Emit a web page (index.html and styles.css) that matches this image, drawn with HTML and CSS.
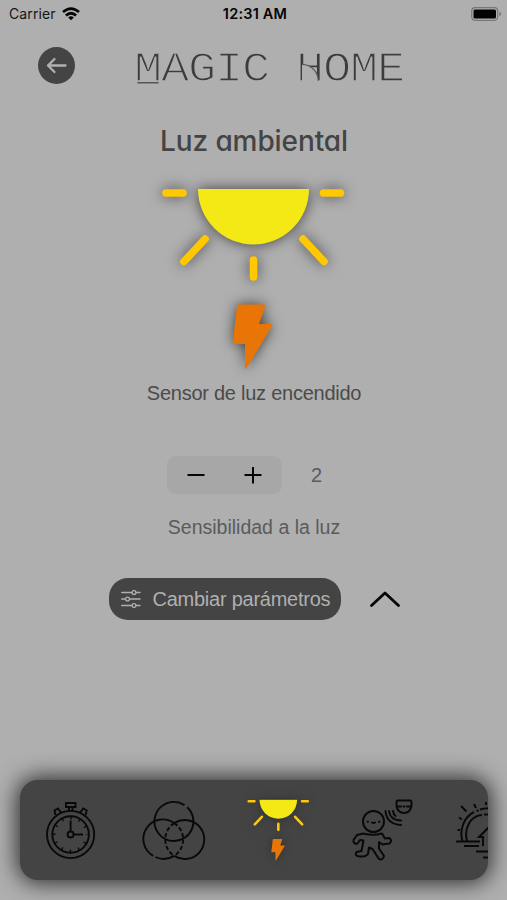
FILE: index.html
```html
<!DOCTYPE html>
<html lang="es">
<head>
<meta charset="utf-8">
<title>Magic Home</title>
<link rel="stylesheet" href="styles.css">
</head>
<body>
<svg class="defs" width="0" height="0" aria-hidden="true">
  <symbol id="sun" viewBox="0 0 186 182">
    <path d="M37 2H148A55.5 55.5 0 0 1 37 2Z" fill="#f4e815"/>
    <g stroke="#ffc800" stroke-width="7.6" stroke-linecap="round">
      <path d="M5 6H22M162.500 6H179.500M44 52 23 74.500M142 52 163 74.500M92.500 73V90"/>
    </g>
    <path d="M78 117.500H102Q105 117.500 104 120L98 137H110Q112 137 111 139L85 182H84V157H73Q71 157 72 154L76 119Q76 117.500 78 117.500Z" fill="#e97506"/>
  </symbol>
</svg>
<div class="screen">
  <header class="status">
    <div class="carrier"><span>Carrier</span>
      <svg width="18" height="14" viewBox="0 0 18 14" fill="none" stroke="#050505" stroke-width="2.700"><path d="M1 5.100Q9-2 17 5.100M3.900 8.600Q9 3.900 14.100 8.600"/><path d="M6.200 10.500Q9 8.200 11.800 10.500L9 13.300Z" fill="#050505" stroke="none"/></svg>
    </div>
    <time>12:31 AM</time>
    <svg class="battery" width="31" height="14" viewBox="0 0 31 14"><rect x=".7" y=".7" width="26" height="12.600" rx="3.500" fill="none" stroke="#777" stroke-width="1.200"/><rect x="2.500" y="2.500" width="22.500" height="9" rx="1.500" fill="#000"/><path d="M28.300 4.500Q32 7 28.300 9.500Z" fill="#777"/></svg>
  </header>
  <div class="brand-row">
    <button class="back" aria-label="Volver"><svg width="37" height="37" viewBox="0 0 37 37" fill="none" stroke="#b0b0b0" stroke-width="2.300" stroke-linecap="round" stroke-linejoin="round"><path d="M27.500 18.500H10M16.500 12 10 18.500 16.500 25"/></svg></button>
    <h1 class="brand"><span class="boxed">M</span>AGIC <span class="arched">H</span>OME</h1>
  </div>
  <main>
    <h2 class="title">Luz ambiental</h2>
    <svg class="hero" width="186" height="182"><use href="#sun"/></svg>
    <p class="state">Sensor de luz encendido</p>
    <div class="level">
      <div class="stepper">
        <button aria-label="Menos"><svg width="18" height="18" stroke="#050505" stroke-width="2"><path d="M.5 9H17.500"/></svg></button>
        <button aria-label="Más"><svg width="18" height="18" stroke="#050505" stroke-width="2"><path d="M.5 9H17.500M9 1V17.500"/></svg></button>
      </div>
      <output>2</output>
    </div>
    <p class="caption">Sensibilidad a la luz</p>
    <div class="actions">
      <button class="change">
        <svg width="20" height="18" viewBox="0 0 20 18" fill="#444" stroke="#b0b0b0" stroke-width="1.300" stroke-linecap="round"><path d="M.7 2.500H19M.7 9H19M.7 15.500H19"/><circle cx="13" cy="2.500" r="1.900"/><circle cx="6.500" cy="9" r="1.900"/><circle cx="13" cy="15.500" r="1.900"/></svg>
        <span>Cambiar parámetros</span>
      </button>
      <svg class="chevron" width="32" height="18" viewBox="0 0 32 18" fill="none" stroke="#050505" stroke-width="2.800" stroke-linecap="round" stroke-linejoin="round"><path d="M2.500 15.500 16 3 29.500 15.500"/></svg>
    </div>
  </main>
  <nav class="dock">
    <div class="track">
      <svg class="timer" width="50" height="59" viewBox="0 0 50 59" fill="none" stroke="#090909" stroke-width="1.900">
        <circle cx="24.600" cy="33.500" r="23.600"/><circle cx="24.600" cy="33.500" r="18.300"/><circle cx="24.600" cy="33.500" r="3"/>
        <path d="M24.600 30.500V19.500M27.600 33.500H37M20 2H29.500V6H20ZM23 6.500V9.500M26.500 6.500V9.500M9.500 14 8.500 9.500 12 7.500 15 11.500M39.700 14 40.700 9.500 37.200 7.500 34.200 11.500"/>
        <circle cx="24.600" cy="33.500" r="16.500" stroke-width="3" stroke-dasharray="1.400 7.239" stroke-dashoffset=".7"/>
      </svg>
      <svg class="venn" width="62" height="59" viewBox="0 0 62 59" fill="none" stroke="#090909" stroke-width="1.900">
        <path d="M41.500 4.100A19.500 19.500 0 1 0 31 40A19.500 19.500 0 0 0 44.200 6.200"/>
        <path d="M31.200 22.100A19.500 19.500 0 1 0 10.200 54.900M12.500 56A19.500 19.500 0 0 0 31.200 54.900"/>
        <path d="M31.200 22.100A19.500 19.500 0 1 1 31.200 54.900"/>
        <path d="M31.200 22.100A19.500 19.500 0 0 1 31.200 54.900M31.200 22.100A19.500 19.500 0 0 0 31.200 54.900" stroke-dasharray="4.200 2.300"/>
      </svg>
      <svg class="mini" width="63" height="62" viewBox="0 0 186 182"><use href="#sun"/></svg>
      <svg width="61" height="63" viewBox="0 0 61 63" fill="none" stroke="#090909" stroke-width="2" stroke-linejoin="round" stroke-linecap="round">
        <circle cx="21.500" cy="22.500" r="10.500"/><path d="M15.500 22.800H16M27 22.800H27.500M20 23.500Q21.500 24.500 23 23.500"/>
        <path d="M11 34.500Q21 37 30 34.500L33 39.500 37 39Q41 41 37.500 44.500L30.500 45.500 27 43V49.500L32 57Q31 61.500 27 60L20.500 50 17 48.500 16 55Q14 58 8 57.500Q2 57 4.500 53L9.500 52 11.500 41.500 8 41 5.500 44.500Q1 45.500 1.500 41L5 36Z"/>
        <path d="M44.500 3Q44.500 1.500 46 1.500H58Q59.500 1.500 59.500 3V7Q58 14 52 14T44.500 7ZM45 7.500H49M55 7.500H59M51.500 7.500H52.500"/>
        <path d="M43.500 17Q41.500 15.500 41 12M49 21.500Q38 21 37 12M49 26Q34.500 25 33.500 12"/>
      </svg>
      <svg width="62" height="62" viewBox="0 0 62 62" fill="none" stroke="#090909" stroke-width="2">
        <path d="M1 42.500H25M9 47H24M21 52.500H39M28 58.500H45M7.500 42C4 31 9 18 19 13M21.500 12 23.500 11.200M25 10.500A28 28 0 0 1 42 10.500M12 42C8.500 29 16 16.500 27 16M29 15.500H36M28 47V38H24L33 29 42 38H38V47M6 7 11.500 12.500M19 5 21 9M4 18.500 7 20.500M2.500 31H5M31 3V6"/>
      </svg>
    </div>
  </nav>
</div>
</body>
</html>
```

FILE: styles.css
```css
* { box-sizing: border-box; }
body, h1, h2, p { margin: 0; }
body { background: #afafaf; overflow: hidden; }
button { border: 0; padding: 0; background: none; font: inherit; }
svg { display: block; flex: none; }
.defs { height: 0; }
.screen {
  width: 507px; height: 900px; overflow: hidden;
  display: flex; flex-direction: column;
  background: #afafaf; color: #4b4b4b;
  font-family: "Liberation Sans", sans-serif;
}
.status {
  height: 27px; padding: 0 6px 0 9px;
  display: grid; grid-template-columns: 1fr auto 1fr; align-items: center;
  font: 14px Inter, sans-serif; color: #151515;
}
.carrier { display: flex; align-items: center; gap: 6px; letter-spacing: 0.1px; }
.status time { font-weight: 600; font-size: 14.5px; letter-spacing: 0.2px; color: #050505; }
.battery { justify-self: end; margin-right: -1px; }
.brand-row { height: 77px; padding: 20px 0 0 38px; display: flex; align-items: flex-start; }
.back { width: 37px; height: 37px; border-radius: 50%; background: #444; }
.brand {
  margin: 3px 0 0 59px; white-space: nowrap;
  font: 400 42px/40px "Liberation Mono", monospace;
  letter-spacing: -1.1px; color: #3c3c3c;
  -webkit-text-stroke: 1.5px #afafaf;
  transform: scaleX(1.12); transform-origin: left;
}
.boxed {
  display: inline-block; height: 40px;
  background: linear-gradient(#555, #555) 3px 32px / 19px 1.5px no-repeat;
}
.arched { display: inline-block; height: 40px; position: relative; }
.arched::after {
  content: ""; position: absolute; left: 5.6px; top: 14px; width: 13.6px; height: 16px;
  background: #afafaf; border: 1.5px solid #555; border-width: 1.5px 1.5px 0 0;
  border-radius: 0 100% 0 0;
}
main { display: flex; flex-direction: column; align-items: center; padding-left: 1px; }
.title {
  height: 72px; padding-top: 20px;
  font: 500 28px/34px Inter, sans-serif;
  font-feature-settings: "cv11"; letter-spacing: -0.1px; color: #444;
}
.hero { margin-top: 11px; overflow: visible; filter: drop-shadow(0 0 7px rgba(0, 0, 0, .65)); }
.state { margin-top: 12px; font-size: 20px; line-height: 24px; letter-spacing: -0.25px; }
.level { margin: 51px 0 0 60px; width: 234px; display: flex; align-items: center; gap: 29px; font-size: 20px; color: #5b5b5b; }
.stepper { width: 115px; height: 38px; border-radius: 9px; background: #a7a7a7; display: grid; grid-template-columns: 1fr 1fr; place-items: center; }
.caption { margin-top: 21px; font-size: 19.5px; line-height: 24px; color: #5b5b5b; }
.actions { width: 292px; margin: 39px 0 0 1px; display: flex; align-items: center; justify-content: space-between; }
.change { width: 232px; height: 42px; padding-left: 12px; border-radius: 19px; background: #444; color: #b0b0b0; display: flex; align-items: center; gap: 12px; font-size: 20px; letter-spacing: -0.25px; white-space: nowrap; }
.dock {
  margin: auto 19px 20px 20px; height: 100px; border-radius: 18px;
  background: #444; box-shadow: 0 0 22px 3px rgba(0, 0, 0, .75);
}
.track { height: 100%; padding: 0 0 0 26px; display: flex; gap: 42px; align-items: center; overflow: hidden; border-radius: inherit; }
.timer { margin-right: 5px; }
.venn { overflow: visible; }
.mini { overflow: visible; filter: drop-shadow(0 0 5px rgba(0, 0, 0, .35)); }
```
